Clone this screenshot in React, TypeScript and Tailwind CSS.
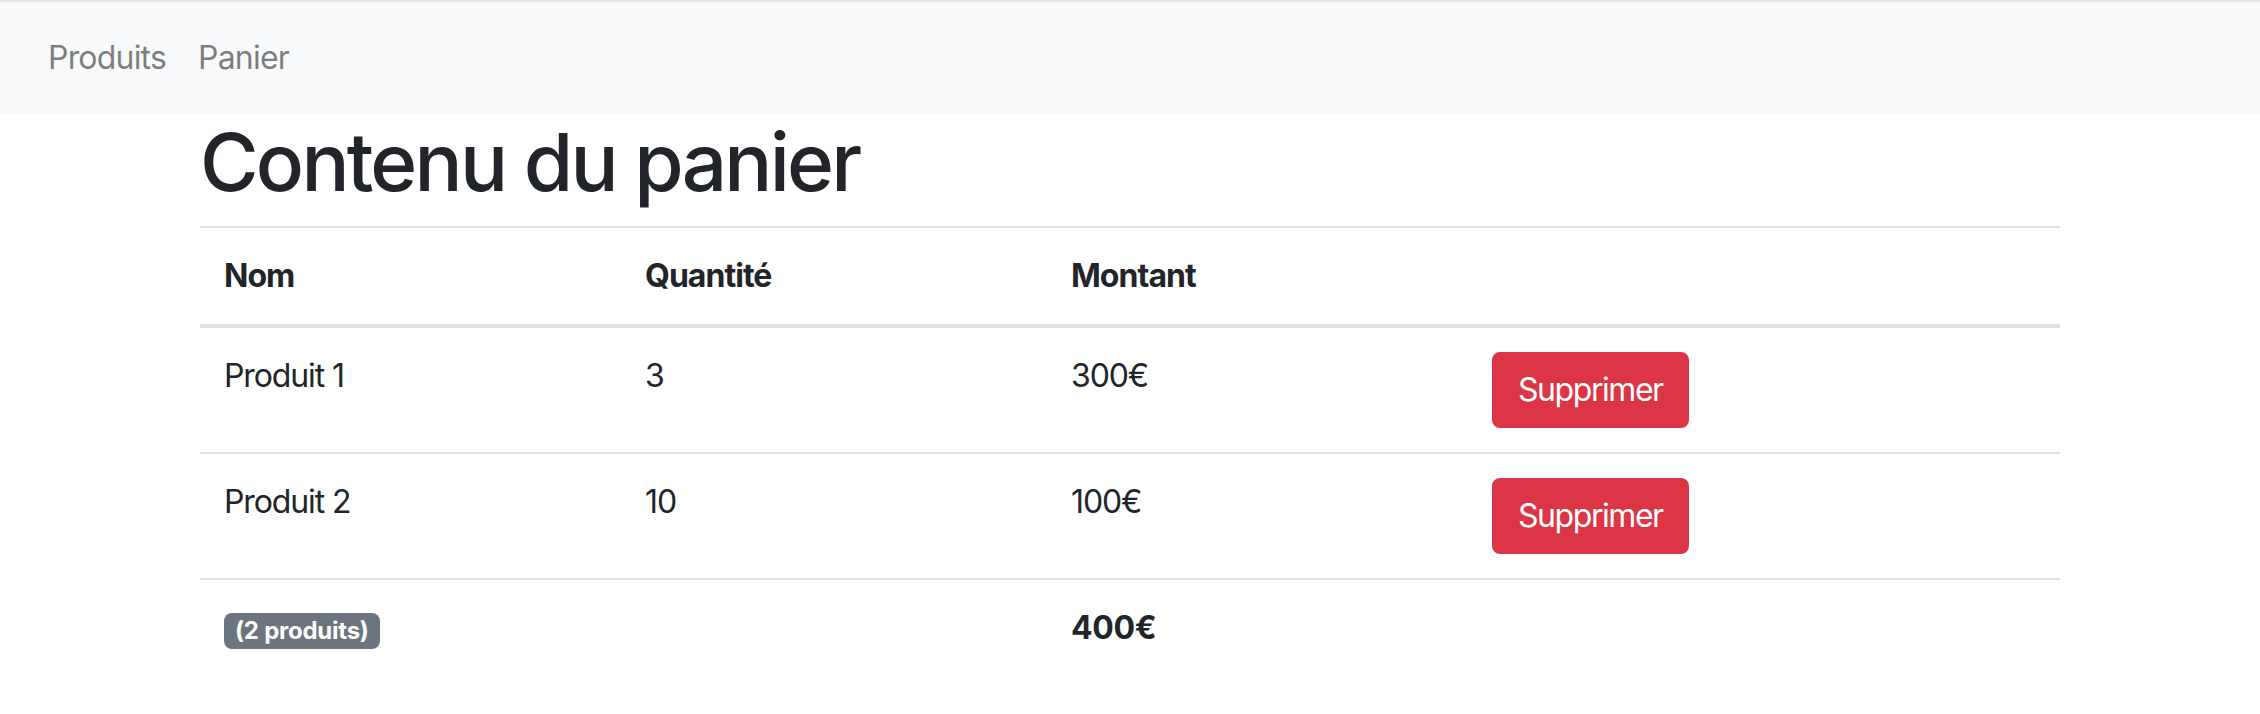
const rows = [
  { nom: "Produit 1", qte: 3, montant: "300€" },
  { nom: "Produit 2", qte: 10, montant: "100€" },
];

export default function App() {
  return (
    <div className="min-h-[714px] bg-white font-['Inter',sans-serif] text-[#212529]">
      <nav className="flex border-t-2 border-[#e4e5e7] bg-[#f8f9fa] px-[32px] py-[16px] tracking-[-0.05em]">
        <a href="#" className="px-[16px] py-[16px] text-[32px] leading-[48px] text-black/50">
          Produits
        </a>
        <a href="#" className="px-[16px] py-[16px] text-[32px] leading-[48px] text-black/50">
          Panier
        </a>
      </nav>

      <div className="mx-auto w-[1920px] px-[30px]">
        <h1 className="mb-[16px] text-[80px] font-medium leading-[96px] tracking-[-0.035em]">Contenu du panier</h1>

        <table className="w-full table-fixed border-collapse text-[32px] leading-[48px] tracking-[-0.035em]">
          <colgroup>
            <col className="w-[421px]" />
            <col className="w-[426px]" />
            <col className="w-[421px]" />
            <col />
          </colgroup>
          <thead>
            <tr>
              <th className="border-t-2 border-b-4 border-[#dee2e6] p-[24px] text-left align-bottom font-bold tracking-[-0.03em]">Nom</th>
              <th className="border-t-2 border-b-4 border-[#dee2e6] p-[24px] text-left align-bottom font-bold tracking-[-0.03em]">Quantité</th>
              <th className="border-t-2 border-b-4 border-[#dee2e6] p-[24px] text-left align-bottom font-bold tracking-[-0.03em]">Montant</th>
              <th className="border-t-2 border-b-4 border-[#dee2e6] p-[24px]"></th>
            </tr>
          </thead>
          <tbody>
            {rows.map((r) => (
              <tr key={r.nom}>
                <td className="border-t-2 border-[#dee2e6] p-[24px] align-top">{r.nom}</td>
                <td className="border-t-2 border-[#dee2e6] p-[24px] align-top">{r.qte}</td>
                <td className="border-t-2 border-[#dee2e6] p-[24px] align-top">{r.montant}</td>
                <td className="border-t-2 border-[#dee2e6] p-[24px] align-top">
                  <button className="rounded-[8px] border-2 border-[#dc3545] bg-[#dc3545] px-[24px] py-[12px] text-[32px] leading-[48px] tracking-[-0.045em] text-white">
                    Supprimer
                  </button>
                </td>
              </tr>
            ))}
            <tr>
              <td className="border-t-2 border-[#dee2e6] p-[24px] align-top">
                <span className="inline-block rounded-[8px] bg-[#6c757d] px-[11px] py-[6px] text-[24px] font-bold leading-none tracking-[-0.01em] text-white">
                  (2 produits)
                </span>
              </td>
              <td className="border-t-2 border-[#dee2e6] p-[24px] align-top"></td>
              <td className="border-t-2 border-[#dee2e6] p-[24px] align-top font-bold tracking-[-0.01em]">400€</td>
              <td className="border-t-2 border-[#dee2e6] p-[24px] align-top"></td>
            </tr>
          </tbody>
        </table>
      </div>
    </div>
  );
}
